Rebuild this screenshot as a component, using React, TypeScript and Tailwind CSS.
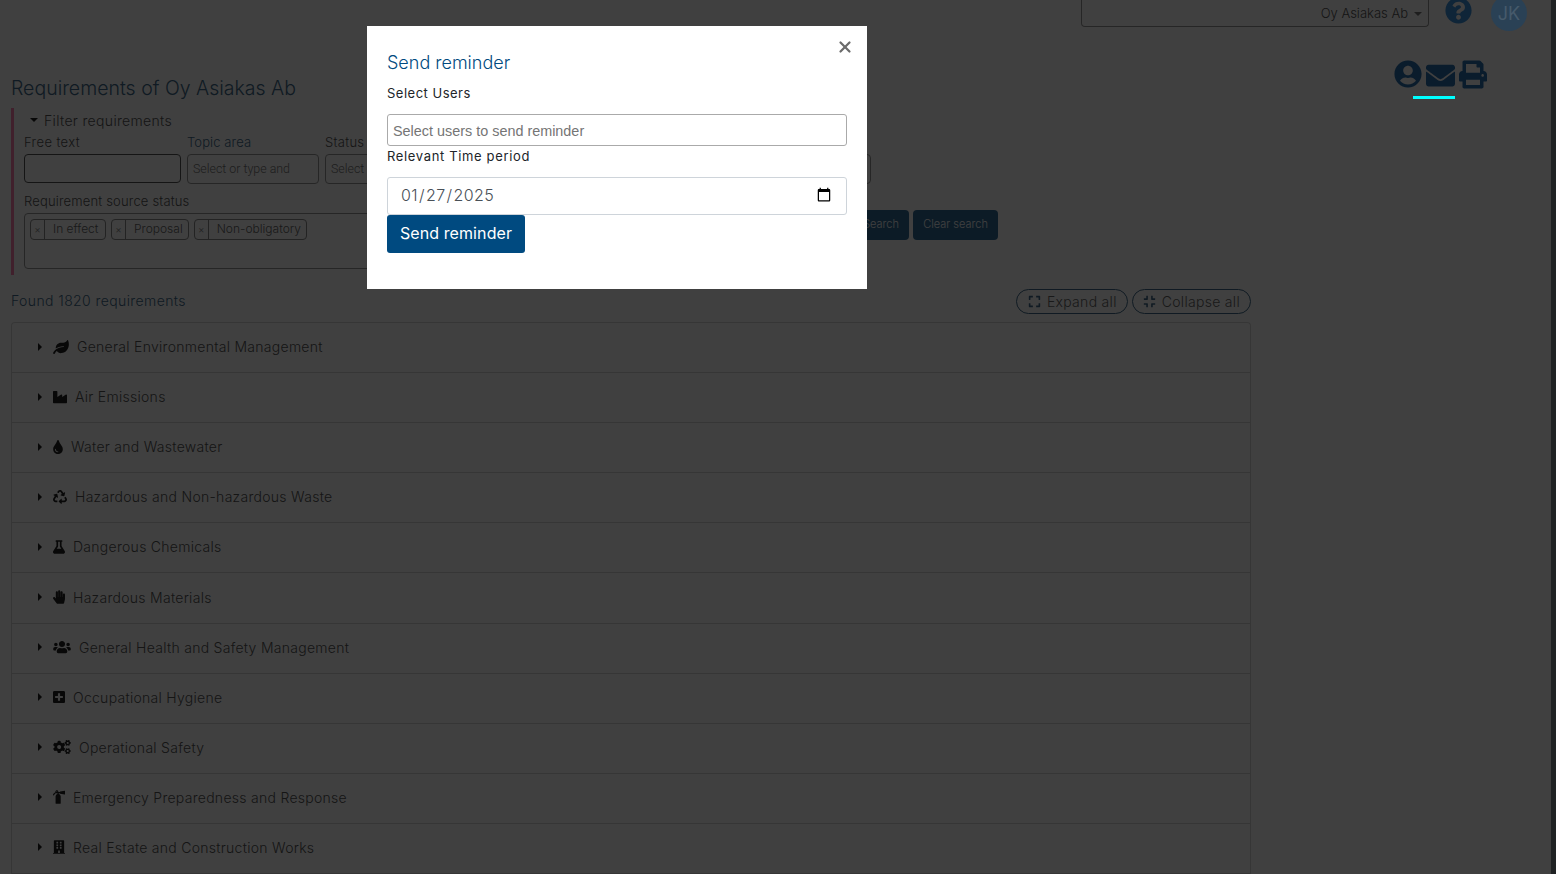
import { FaBuilding, FaCogs, FaCompress, FaExpand, FaEnvelope, FaFireExtinguisher, FaFlask, FaHandPaper, FaIndustry, FaLeaf, FaPlusSquare, FaPrint, FaQuestionCircle, FaRecycle, FaTint, FaUserCircle, FaUsers } from "react-icons/fa";
import { X } from "lucide-react";

const rows = [
  { icon: FaLeaf, w: "w-[16px]", title: "General Environmental Management" },
  { icon: FaIndustry, w: "w-[14px]", title: "Air Emissions" },
  { icon: FaTint, w: "w-[10px]", title: "Water and Wastewater" },
  { icon: FaRecycle, w: "w-[14px]", title: "Hazardous and Non-hazardous Waste" },
  { icon: FaFlask, w: "w-[12px]", title: "Dangerous Chemicals" },
  { icon: FaHandPaper, w: "w-[12px]", title: "Hazardous Materials" },
  { icon: FaUsers, w: "w-[18px]", title: "General Health and Safety Management" },
  { icon: FaPlusSquare, w: "w-[12px]", title: "Occupational Hygiene" },
  { icon: FaCogs, w: "w-[18px]", title: "Operational Safety" },
  { icon: FaFireExtinguisher, w: "w-[12px]", title: "Emergency Preparedness and Response" },
  { icon: FaBuilding, w: "w-[12px]", title: "Real Estate and Construction Works" },
];

function Tag({ label }: { label: string }) {
  return (
    <span className="flex h-[21px] min-w-[76px] items-center rounded border border-[#8a8a8a] text-[12px] text-[#666]">
      <span className="flex h-full w-[14px] items-center justify-center border-r border-[#8a8a8a] text-[10px] text-[#888]">×</span>
      <span className="px-[5px] pb-px pl-2">{label}</span>
    </span>
  );
}

export default function App() {
  return (
    <div className="h-[874px] overflow-hidden bg-white font-['Inter',sans-serif] text-[#555]">
      <div className="flex h-[874px] w-full">
        <div className="min-w-0 flex-1">
          <div className="flex h-[27px] items-start">
            <div className="ml-[1081px] flex h-[27px] w-[348px] items-center justify-end rounded-b border border-t-0 border-[#999] pr-[6px] pt-[2px] text-[13px] font-light">
              Oy Asiakas Ab
              <span className="ml-[6px] h-0 w-0 border-x-[4px] border-t-[4px] border-x-transparent border-t-[#777]"></span>
            </div>
            <FaQuestionCircle className="relative z-10 ml-[16px] mt-[-3px] h-[27px] w-[27px] text-[#0f2538]" />
            <div className="relative z-10 ml-[19px] mt-[-5px] flex h-[36px] w-[36px] items-center justify-center rounded-full bg-[#2a4155] text-[18px] text-[#465a6b]">JK</div>
          </div>

          <div className="flex h-[81px] items-start">
            <h1 className="ml-[11px] mt-[47px] text-[19.5px] font-light leading-[28px] text-[#406a8a]">Requirements of Oy Asiakas Ab</h1>
            <div className="relative z-10 ml-auto mr-[64px] mt-[33px] flex items-start text-[#0a1c2c]">
              <FaUserCircle className="h-[28px] w-[28px]" />
              <FaEnvelope className="ml-[4px] mt-[1px] h-[29px] w-[29px]" />
              <FaPrint className="ml-[4px] h-[29px] w-[28px]" />
            </div>
          </div>

          <div className="ml-[11px] h-[167px] border-l-[3px] border-[#ff80b0] pl-[10px] text-[13px] font-light">
            <div className="ml-[6px] flex h-[24px] items-center gap-[6px] text-[14px] tracking-[0.33px]">
              <span className="h-0 w-0 border-x-[4px] border-t-[4px] border-x-transparent border-t-[#222]"></span>
              Filter requirements
            </div>
            <div className="flex gap-[6px]">
              <div className="w-[157px]">
                <div className="h-[22px] leading-[20px] tracking-[0.4px]">Free text</div>
                <div className="h-[29px] rounded-sm border border-[#555]"></div>
              </div>
              <div className="w-[132px]">
                <div className="h-[22px] leading-[20px] tracking-[0.1px] text-[#406a8a]">Topic area</div>
                <div className="flex h-[30px] items-center rounded border border-[#999] px-[5px] font-['Roboto',sans-serif] text-[12.4px] text-[#757575]">Select or type and</div>
              </div>
              <div className="w-[546px]">
                <div className="h-[22px] leading-[20px] tracking-[0.3px]">Status</div>
                <div className="flex h-[30px] items-center rounded border border-[#999] px-[5px] font-['Roboto',sans-serif] text-[12.4px] text-[#757575]">Select</div>
              </div>
            </div>
            <div className="mt-[9px] flex items-start gap-[4px]">
              <div className="w-[800px]">
                <div className="h-[20px] leading-[16px] tracking-[0.17px]">Requirement source status</div>
                <div className="flex h-[56px] items-start gap-[5px] rounded border border-[#999] px-[5px] pt-[5px]">
                  <Tag label="In effect" />
                  <Tag label="Proposal" />
                  <Tag label="Non-obligatory" />
                </div>
              </div>
              <div className="ml-[9px] mt-[17px] flex gap-[4px] text-[11px] text-white">
                <span className="flex h-[30px] w-[72px] items-center justify-end rounded-sm bg-[#306c98] px-[10px] pb-px">Search</span>
                <span className="flex h-[30px] w-[85px] items-center justify-center rounded-sm bg-[#306c98] pb-px">Clear search</span>
              </div>
            </div>
          </div>

          <div className="flex h-[47px] w-[1251px] items-center pl-[11px] pt-[3px]">
            <span className="text-[14px] font-light tracking-[0.4px] text-[#406a8a]">Found 1820 requirements</span>
            <div className="ml-auto mt-[2px] flex gap-[4px] text-[14px] font-light tracking-[0.3px] text-[#666]">
              <span className="flex h-[25px] items-center gap-[6px] rounded-full border border-[#406a8a] pl-[11px] pr-[10px]"><FaExpand className="h-[13px] w-[13px] text-[#406a8a]" />Expand all</span>
              <span className="flex h-[25px] items-center gap-[6px] rounded-full border border-[#406a8a] px-[10px]"><FaCompress className="h-[13px] w-[13px] text-[#406a8a]" />Collapse all</span>
            </div>
          </div>

          <div className="ml-[11px] w-[1240px] rounded-t border border-b-0 border-[#d8d8d8]">
            {rows.map((r) => (
              <div key={r.title} className="flex h-[50.1px] items-center border-b border-[#d8d8d8] pb-[2px] pl-[26px] text-[14px] font-light tracking-[0.28px]">
                <span className="h-0 w-0 border-y-[4px] border-l-[4px] border-y-transparent border-l-[#222]"></span>
                <r.icon className={`ml-[11px] h-[14px] ${r.w} text-[#222]`} />
                <span className="ml-2">{r.title}</span>
              </div>
            ))}
          </div>
        </div>
        <div className="w-[5px] shrink-0 bg-[#808a90]"></div>
      </div>

      {/* backdrop + modal */}
      <div className="fixed inset-0 bg-black/75 pl-[367px] pt-[26px]">
        <div className="h-[263px] w-[500px] bg-white px-[20px] pt-[26px] text-[#212529]">
          <div className="relative">
            <X className="absolute right-[-7px] top-[-14px] h-[18px] w-[18px] text-[#6b6b6b]" strokeWidth={3} />
          </div>
          <h2 className="text-[18px] font-light leading-[22px] text-[#004a80]">Send reminder</h2>
          <div className="mt-[10px] h-[30px] text-[13px] leading-[18px] tracking-[0.5px]">Select Users</div>
          <input placeholder="Select users to send reminder" className="block h-[32px] w-[460px] rounded-[3px] border border-[#aaa] px-[5px] pt-[2px] font-['Liberation_Sans',sans-serif] text-[14.4px] placeholder:text-[#757575]" />
          <div className="h-[22px] text-[13px] leading-[20px] tracking-[0.65px]">Relevant Time period</div>
          <div className="h-[9px]"></div>
          <input type="date" defaultValue="2025-01-27" className="block h-[38px] w-[460px] rounded-[3px] border border-[#ced4da] px-[12px] pb-[2px] text-[16px] font-light tracking-[0.4px] text-[#495057]" />
          <button className="block h-[38px] w-[138px] rounded-[3px] bg-[#004a80] pb-[2px] text-[16px] tracking-[0.1px] text-white">Send reminder</button>
        </div>
      </div>
      <div className="fixed left-[1413px] top-[96px] h-[3px] w-[42px] bg-[#00ffff]"></div>
    </div>
  );
}
